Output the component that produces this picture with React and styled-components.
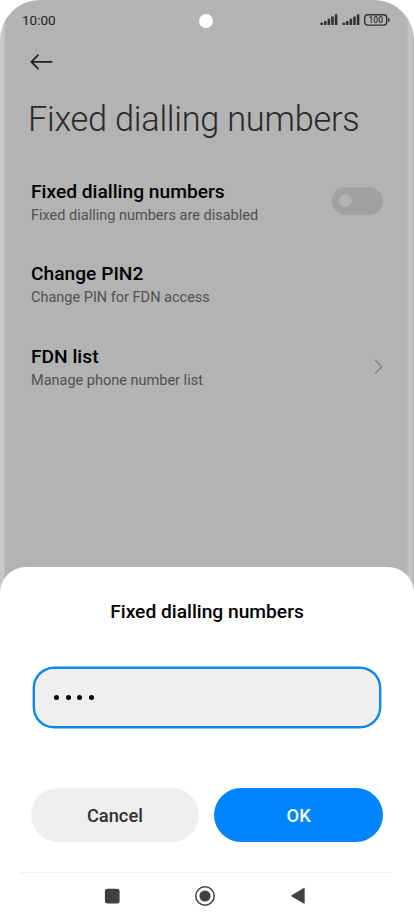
import React, { useState } from 'react';
import styled, { createGlobalStyle } from 'styled-components';

const GlobalStyle = createGlobalStyle`
  * {
    box-sizing: border-box;
  }

  body {
    margin: 0;
    background: #fff;
    font-family: Roboto, 'Liberation Sans', sans-serif;
  }
`;

const Phone = styled.div`
  position: relative;
  width: 414px;
  height: 920px;
  overflow: hidden;
  border-radius: 40px 40px 0 0;
  background: linear-gradient(
    to right,
    #c6c6c6 0,
    #cacaca 3px,
    #b3b3b3 6px,
    #b3b3b3 405px,
    #bcbcbc 408px,
    #cacaca 410px,
    #bcbcbc 412px,
    #b9b9b9 414px
  );
`;

const StatusBar = styled.div`
  display: flex;
  align-items: center;
  justify-content: space-between;
  height: 40px;
  padding: 0 24px 0 22px;
`;

const Clock = styled.span`
  width: 68px;
  font-size: 13.5px;
  line-height: 16px;
  color: #222;
`;

const Camera = styled.div`
  width: 14px;
  height: 14px;
  margin: 2px 0 0 1px;
  border-radius: 50%;
  background: #fff;
`;

const StatusIcons = styled.div`
  display: flex;
  align-items: center;
  gap: 4px;
  padding-bottom: 1px;

  svg {
    display: block;
  }
`;

const BatteryText = styled.text`
  font-size: 8.5px;
  font-weight: 500;
  fill: #303030;
`;

const BackButton = styled.button`
  display: block;
  margin: 13px 0 0 30px;
  padding: 0;
  border: none;
  background: none;

  svg {
    display: block;
  }
`;

const PageTitle = styled.h1`
  margin: 28px 0 0 28px;
  font-size: 34.3px;
  font-weight: 300;
  line-height: 40px;
  letter-spacing: -0.25px;
  white-space: nowrap;
  color: #292929;
`;

const SettingsList = styled.div`
  margin-top: 42px;
  padding: 0 31px;
`;

const Row = styled.div`
  display: flex;
  align-items: center;
  justify-content: space-between;
  height: 46px;
  margin-bottom: 36.4px;
`;

const RowTitle = styled.div`
  font-size: 19.2px;
  font-weight: 500;
  line-height: 24px;
  white-space: nowrap;
  color: #000;
`;

const RowText = styled.div`
  font-size: 14.5px;
  line-height: 24px;
  white-space: nowrap;
  color: #505050;
`;

const Toggle = styled.button`
  display: flex;
  align-items: center;
  justify-content: ${(props) => (props.$on ? 'flex-end' : 'flex-start')};
  width: 51px;
  height: 28px;
  margin-bottom: 7px;
  padding: 0 7px;
  border: none;
  border-radius: 14px;
  background: #a1a1a1;
`;

const Knob = styled.span`
  width: 13px;
  height: 13px;
  border-radius: 50%;
  background: #b3b3b3;
`;

const Sheet = styled.div`
  position: absolute;
  left: 0;
  right: 0;
  bottom: 0;
  display: flex;
  flex-direction: column;
  height: 353px;
  border-radius: 26px 26px 0 0;
  background: #fff;
`;

const SheetTitle = styled.h2`
  margin: 33px 0 0;
  font-size: 19.2px;
  font-weight: 500;
  line-height: 24px;
  text-align: center;
  color: #000;
`;

const PinField = styled.div`
  display: flex;
  align-items: center;
  gap: 6.5px;
  height: 61px;
  margin: 43px 33px 0;
  padding-left: 19px;
  border: 2px solid #0f87ea;
  border-radius: 21px;
  background: #efefef;
  box-shadow: 0 0 0 0.4px #0f87ea;
`;

const PinDot = styled.span`
  width: 5px;
  height: 5px;
  border-radius: 50%;
  background: #000;
`;

const Actions = styled.div`
  display: flex;
  gap: 15px;
  margin: 60px 31px 0 30.5px;
`;

const Button = styled.button`
  flex: 1;
  height: 54px;
  padding: 0;
  border: none;
  border-radius: 27px;
  font-family: inherit;
  font-size: 18.3px;
  font-weight: 500;
  color: ${(props) => (props.$primary ? '#f2fbff' : '#303030')};
  background: ${(props) => (props.$primary ? '#0085ff' : '#efefef')};
`;

const NavBar = styled.div`
  display: flex;
  align-items: center;
  justify-content: space-between;
  height: 48px;
  margin: 30px 22px 0 20px;
  padding: 0 86px 2px 84px;
  border-top: 1px solid #f1f1f1;

  svg {
    display: block;
  }
`;

const SignalIcon = () => (
  <svg width="18" height="11" viewBox="0 0 18 11" fill="#303030">
    <rect x="0.4" y="8.6" width="2.6" height="2.4" rx="0.6" />
    <rect x="4" y="7" width="2.5" height="4" rx="0.6" />
    <rect x="7.6" y="4.8" width="2.5" height="6.2" rx="0.6" />
    <rect x="11.2" y="2.6" width="2.5" height="8.4" rx="0.6" />
    <rect x="14.8" y="0.2" width="2.6" height="10.8" rx="0.6" />
  </svg>
);

const BatteryIcon = () => (
  <svg width="26" height="12" viewBox="0 0 26 12">
    <rect x="0.7" y="0.7" width="22" height="10.4" rx="3" fill="none" stroke="#303030" strokeWidth="1.4" />
    <path d="M24 4q1.8 0 1.8 1.9T24 7.8z" fill="#303030" />
    <BatteryText x="11.7" y="9" textAnchor="middle" textLength="14.6">
      100
    </BatteryText>
  </svg>
);

const BackArrow = () => (
  <svg width="23" height="18" viewBox="0 0 23 18" fill="none" stroke="#202020" strokeWidth="1.8" strokeLinecap="round" strokeLinejoin="round">
    <path d="M8 2.2L1.4 8.9L8 15.6M1.6 8.9H21.7" />
  </svg>
);

const Chevron = () => (
  <svg width="10" height="20" viewBox="0 0 10 20" fill="none" stroke="#7d7d7d" strokeWidth="1.3">
    <path d="M2 1L8.8 7.8L2 14.6" />
  </svg>
);

const rows = [
  { title: 'Fixed dialling numbers', text: 'Fixed dialling numbers are disabled', control: 'toggle' },
  { title: 'Change PIN2', text: 'Change PIN for FDN access' },
  { title: 'FDN list', text: 'Manage phone number list', control: 'link' },
];

const App = () => {
  const [enabled, setEnabled] = useState(false);
  const pin = '0000';

  return (
    <>
      <GlobalStyle />
      <Phone>
        <StatusBar>
          <Clock>10:00</Clock>
          <Camera />
          <StatusIcons>
            <SignalIcon />
            <SignalIcon />
            <BatteryIcon />
          </StatusIcons>
        </StatusBar>

        <BackButton aria-label="Back">
          <BackArrow />
        </BackButton>
        <PageTitle>Fixed dialling numbers</PageTitle>

        <SettingsList>
          {rows.map((row) => (
            <Row key={row.title}>
              <div>
                <RowTitle>{row.title}</RowTitle>
                <RowText>{row.text}</RowText>
              </div>
              {row.control === 'toggle' && (
                <Toggle $on={enabled} onClick={() => setEnabled(!enabled)}>
                  <Knob />
                </Toggle>
              )}
              {row.control === 'link' && <Chevron />}
            </Row>
          ))}
        </SettingsList>

        <Sheet>
          <SheetTitle>Fixed dialling numbers</SheetTitle>
          <PinField>
            {pin.split('').map((digit, index) => (
              <PinDot key={index} />
            ))}
          </PinField>
          <Actions>
            <Button>Cancel</Button>
            <Button $primary>OK</Button>
          </Actions>
          <NavBar>
            <svg width="16" height="16" viewBox="0 0 16 16">
              <rect x="0.9" y="0.7" width="14.7" height="14.7" rx="2.6" fill="#404040" />
            </svg>
            <svg width="22" height="22" viewBox="0 0 22 22">
              <circle cx="11" cy="11" r="9.2" fill="none" stroke="#404040" strokeWidth="1.5" />
              <circle cx="11" cy="11" r="5.6" fill="#404040" />
            </svg>
            <svg width="16" height="18" viewBox="0 0 16 18">
              <path d="M1.6 8.2L13.8 0.9q0.9-0.5 0.9 0.5v14.6q0 1-0.9 0.5L1.6 9.4q-0.9-0.6 0-1.2z" fill="#404040" />
            </svg>
          </NavBar>
        </Sheet>
      </Phone>
    </>
  );
};

export default App;
